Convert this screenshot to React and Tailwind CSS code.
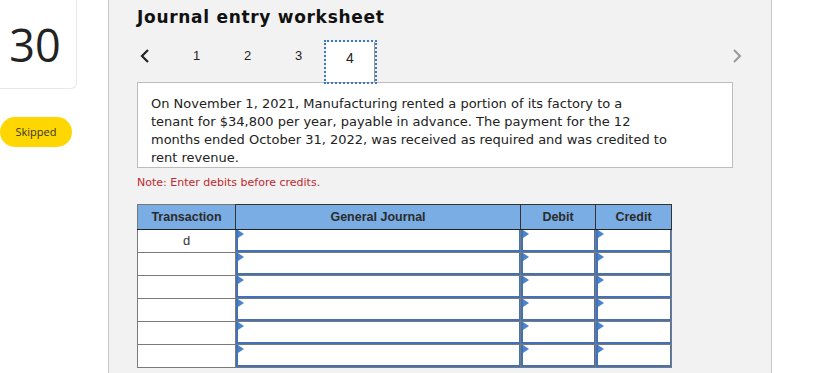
import React from 'react';

const rows = ['d', '', '', '', '', ''];

const Flag = () => (
  <span className="absolute left-0 top-0 w-0 h-0 border-y-[4px] border-y-transparent border-l-[6px] border-l-[#4a84cc]" />
);

const InputCell = () => (
  <td className="p-0 border border-[#7a7a7a] h-[23px]">
    <div className="relative h-[22px] bg-white border-l-2 border-b-2 border-r border-[#4272b5]">
      <Flag />
    </div>
  </td>
);

const App = () => {
  return (
    <div className="flex w-[840px] h-[373px] bg-white overflow-hidden" style={{ fontFamily: '"DejaVu Sans", Verdana, sans-serif' }}>
      <div className="w-[108px] shrink-0">
        <div className="w-[77px] h-[89px] border-r border-b border-[#e8e8e8] rounded-br-md flex items-center justify-center pr-[6px] pt-[1px]">
          <span className="text-[45px] text-[#222] leading-none" style={{ fontFamily: '"Open Sans", sans-serif' }}>30</span>
        </div>
        <div className="mt-[28px] w-[72px] h-[30px] rounded-full bg-[#ffd700] flex items-center justify-center text-[11px] text-[#333]" style={{ fontFamily: '"Open Sans", sans-serif' }}>
          Skipped
        </div>
      </div>

      <div className="w-[664px] shrink-0 bg-[#f2f2f2] border-x border-[#c8c8c8] pl-[28px]">
        <h1 className="pt-[5px] text-[17px] font-bold leading-[24px] tracking-[0.7px] text-[#111]">Journal entry worksheet</h1>

        <div className="mt-[11px] h-[42px] flex items-start text-[13px] text-[#222]" style={{ fontFamily: '"Liberation Sans", Arial, sans-serif' }}>
          <div className="w-[34px] h-[32px] flex items-center pl-[2px]">
            <svg width="12" height="16" viewBox="0 0 12 16"><path d="M9 2 L3 8 L9 14" fill="none" stroke="#222" strokeWidth="2.2" /></svg>
          </div>
          <div className="w-[51px] h-[32px] flex items-center justify-center">1</div>
          <div className="w-[51px] h-[32px] flex items-center justify-center">2</div>
          <div className="w-[51px] h-[32px] flex items-center justify-center">3</div>
          <div className="relative z-10 w-[53px] h-[44px] border-2 border-dotted border-[#3a78c4] p-0">
            <div className="h-full bg-white border-r border-[#999] flex justify-center pt-[6px] text-[14px]">4</div>
          </div>
          <div className="ml-auto mr-[28px] h-[32px] flex items-center">
            <svg width="12" height="16" viewBox="0 0 12 16"><path d="M3 2 L9 8 L3 14" fill="none" stroke="#9a9a9a" strokeWidth="2" /></svg>
          </div>
        </div>

        <div className="w-[596px] bg-white border border-[#bdbdbd] pl-[13px] pt-[12px] text-[13px] leading-[18px] text-[#222]">
          On November 1, 2021, Manufacturing rented a portion of its factory to a<br />
          tenant for $34,800 per year, payable in advance. The payment for the 12<br />
          months ended October 31, 2022, was received as required and was credited to<br />
          rent revenue.
        </div>

        <p className="mt-[7px] text-[11px] leading-[16px] text-[#c0282d]">Note: Enter debits before credits.</p>

        <table className="mt-[13px] border-collapse table-fixed w-[534px]" style={{ fontFamily: '"Liberation Sans", Arial, sans-serif' }}>
          <colgroup>
            <col className="w-[98px]" />
            <col className="w-[285px]" />
            <col className="w-[75px]" />
            <col className="w-[76px]" />
          </colgroup>
          <thead>
            <tr className="h-[25px] bg-[#7aade4] text-[12.5px] font-bold text-[#2b2b2b]">
              <th className="border border-[#777] border-r-[#333] border-b-[#222] font-bold">Transaction</th>
              <th className="border border-[#333] border-b-[#222] font-bold">General Journal</th>
              <th className="border border-[#333] border-b-[#222] font-bold">Debit</th>
              <th className="border border-[#333] border-b-[#222] font-bold">Credit</th>
            </tr>
          </thead>
          <tbody>
            {rows.map((t, i) => (
              <tr key={i} className="h-[23px]">
                <td className="p-0 bg-white border border-[#7a7a7a] text-center text-[13px] text-[#333] align-middle">{t}</td>
                <InputCell />
                <InputCell />
                <InputCell />
              </tr>
            ))}
          </tbody>
        </table>
      </div>
    </div>
  );
};

export default App;
